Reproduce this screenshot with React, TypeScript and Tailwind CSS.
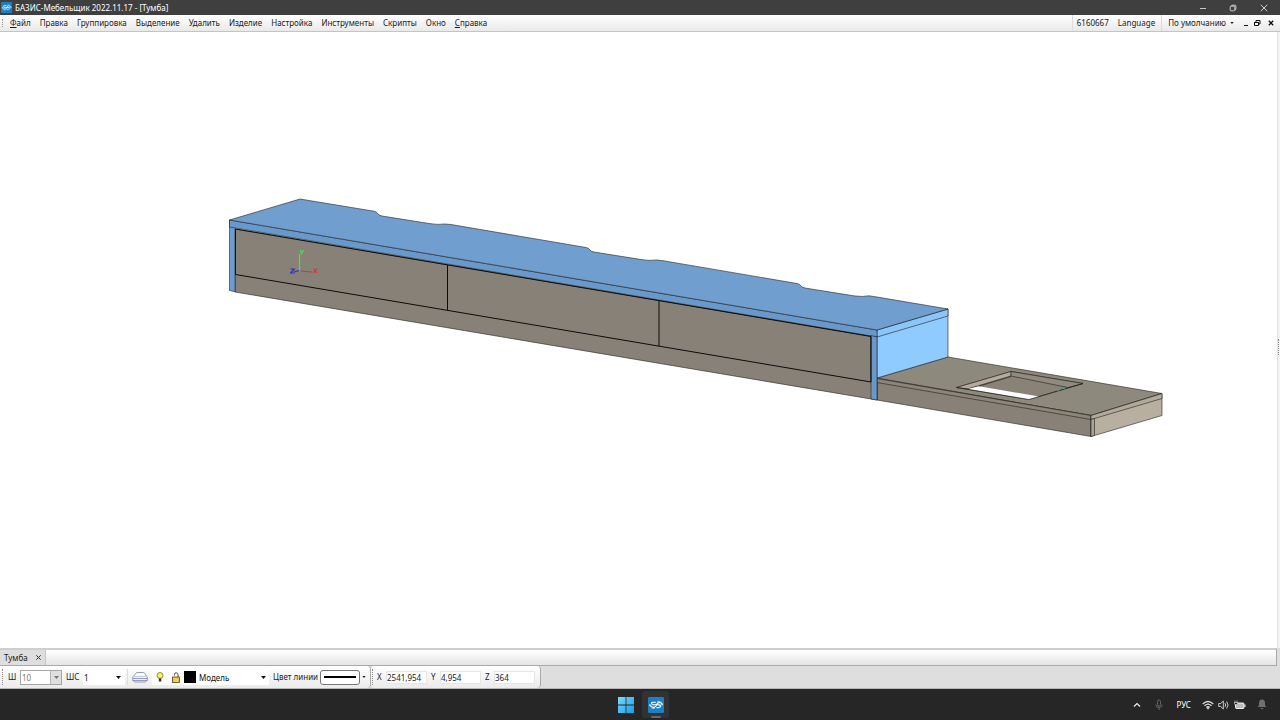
import type { ReactNode } from 'react';

const menuItems = ['Файл', 'Правка', 'Группировка', 'Выделение', 'Удалить', 'Изделие', 'Настройка', 'Инструменты', 'Скрипты', 'Окно', 'Справка'];
const underlined = new Set(['Файл', 'Справка']);

function AppIcon({ className }: { className: string }) {
  return (
    <svg className={className} viewBox="0 0 16 16" aria-hidden="true">
      <rect width="16" height="16" rx="1.2" fill="#1a7fc4" />
      <g fill="none" stroke="#fff" strokeLinecap="round">
        <path d="M7.500 5.200H4.800Q3.200 5.400 3.600 6.400T5.800 7.800H10.200Q12.400 8 12.600 9T11 10.600H8.800" strokeWidth="1.100" />
        <path d="M1.600 8.200Q3.400 10.600 6 10.400Q7.800 10.200 8.400 8.200Q9 5.600 11.200 5.400Q13.200 5.400 14.500 7.400" strokeWidth="1.100" />
        <path d="M2 7.800h4M10 8h4.400M9.500 4.500h2.500M4 11.400h2.600" strokeWidth=".7" stroke="#cfe8fa" />
      </g>
    </svg>
  );
}

function Caret({ className = 'h-[3px] w-[5px]' }: { className?: string }) {
  return (
    <svg className={`shrink-0 ${className}`} viewBox="0 0 5 3" aria-hidden="true">
      <path d="M0 0h5L2.500 3z" fill="currentColor" />
    </svg>
  );
}

function Grip() {
  return <span className="h-4 w-0 shrink-0 border-l border-dotted border-[#8d8d8d]" aria-hidden="true" />;
}

function TitleBar() {
  return (
    <header className="flex h-[15px] shrink-0 items-center justify-between bg-[#3f3f3f] text-white">
      <div className="flex items-center gap-[3px] pl-px">
        <AppIcon className="h-[11px] w-[11px]" />
        <h1 className="whitespace-nowrap text-[8px] leading-[15px]">БАЗИС-Мебельщик 2022.11.17 - [Тумба]</h1>
      </div>
      <div className="flex pr-px">
        <button aria-label="Свернуть" className="flex h-[14px] w-[30px] items-center justify-center">
          <svg className="h-2 w-2" viewBox="0 0 8 8"><path d="M1 4.500h6" stroke="#e8e8e8" strokeWidth=".8" /></svg>
        </button>
        <button aria-label="Развернуть" className="flex h-[14px] w-[30px] items-center justify-center">
          <svg className="h-2 w-2" viewBox="0 0 8 8" fill="none" stroke="#e8e8e8" strokeWidth=".8"><rect x="1.200" y="2.200" width="4.600" height="4.600" rx=".8" /><path d="M2.800 2V1.200h3.200q.9 0 .9.900v3.300H6" /></svg>
        </button>
        <button aria-label="Закрыть" className="flex h-[14px] w-[31px] items-center justify-center">
          <svg className="h-2 w-2" viewBox="0 0 8 8"><path d="M.8 .8l6.400 6.400M7.200 .8L.8 7.200" stroke="#f2f2f2" strokeWidth=".8" /></svg>
        </button>
      </div>
    </header>
  );
}

function MenuBar() {
  return (
    <div className="flex h-[17px] shrink-0 items-center justify-between border-b border-[#c4c4c4] bg-linear-to-b from-white to-[#e9e9e9] text-[#1b1b1b]">
      <div className="flex items-center pl-[2px]">
        <span className="h-2 border-l border-dotted border-[#999]" aria-hidden="true" />
        <nav className="flex gap-[9px] pl-[7px]">
          {menuItems.map((item) => (
            <button key={item} className="whitespace-nowrap text-[8px] leading-4">
              {underlined.has(item) ? <><u>{item[0]}</u>{item.slice(1)}</> : item}
            </button>
          ))}
        </nav>
      </div>
      <div className="flex items-center text-[8px] leading-4">
        <span className="border-l border-[#dcdcdc] pl-1">6160667</span>
        <button className="pr-[6px] pl-[9px]">Language</button>
        <button className="flex items-center gap-1 border-l border-[#dcdcdc] pl-[6px]">
          По умолчанию <Caret className="h-[2px] w-[4px]" />
        </button>
        <button aria-label="Свернуть окно" className="ml-2 flex w-[8px] justify-center">
          <svg className="h-2 w-2" viewBox="0 0 8 8"><path d="M2 6.500h4" stroke="#111" /></svg>
        </button>
        <button aria-label="Восстановить окно" className="ml-[3px] flex w-[8px] justify-center">
          <svg className="h-2 w-2" viewBox="0 0 8 8" fill="none" stroke="#111"><path d="M1.500 3.500h4v3h-4zM3 3V1.500h4V5H6M1 3.500h5" /></svg>
        </button>
        <button aria-label="Закрыть окно" className="ml-[6px] mr-[5px] flex w-[8px] justify-center">
          <svg className="h-2 w-2" viewBox="0 0 8 8"><path d="M1.800 1.800l4.400 4.400M6.200 1.800l-4.400 4.400" stroke="#111" strokeWidth="1.300" /></svg>
        </button>
      </div>
    </div>
  );
}

function Model() {
  return (
    <svg className="h-full min-w-0 flex-1" viewBox="0 32 1277 616" role="img" aria-label="Тумба" strokeLinejoin="round">
      <g stroke="#24221f" strokeWidth=".6">
        <path d="M877 378L948 357L1162 393.500L1091 415.500z" fill="#8d897d" />
        <path d="M877 378.500L1091 415.500V436.500L877 400z" fill="#888177" />
        <path d="M877 378.500L1091 415.500V419.500L877 382.500z" fill="#8b857a" />
        <path d="M1091 415.500L1162 393.500V415.500L1091 436.500z" fill="#b8afa1" />
        <path d="M1091 415.500L1162 393.500V398.500L1091 419.500z" fill="#b1a99b" />
        <path d="M1091 419.500L1094.500 418.500V435.500L1091 436.500z" fill="#aaa297" />
        <path d="M956.500 387.500L1011 371.500L1083 383.500L1029 399.500z" fill="#898277" />
        <path d="M956.500 387.500L1011 371.500V376L968 388.800z" fill="#b4ab9d" />
        <path d="M1011 371.500L1083 383.500L1068 387.500L1011 376z" fill="#918a7e" />
        <path d="M968 389L979 386.200L1039 396.500L1029 399.500z" fill="#fff" stroke="none" />
        <path d="M956.500 387.500L1029 399.500L1083 383.500M979 386.200L1011 376.500" fill="none" />
        <path d="M1057 391l5-3 3 1" fill="none" stroke="#60988b" strokeWidth="1" />
        <path d="M877 330L948 309V357L877 378z" fill="#90cbff" />
        <path d="M877 330L948 309V316L877 337z" fill="#8bc5fa" />
        <path d="M235 229L871 336V382L877 383V400L235 292z" fill="#888177" />
        <path d="M229.500 220L235 228V291.700L229.500 290.500z" fill="#6c9dd1" />
        <path d="M229.500 220L877 330V337L229.500 227z" fill="#6999cb" />
        <path d="M871 335.500L877 337V400L871 399z" fill="#6999cb" />
        <path d="M229.500 220L300 199L374 211.200Q377 211.700 378 214Q379 215.500 382 216L429 223.500Q438 225 445 224L451 224.500L586 247.500Q589 248 590 250Q591 251.500 594 252L641 259.500Q649 261 657 260L663 260.700L797 283.500Q800 284 801 286Q802 287.500 805 288L855 296Q863 297 869 295.800L877 297L948 309L877 330z" fill="#709ece" />
      </g>
      <g fill="none" stroke="#0c0c0c" strokeWidth="1">
        <path d="M235.500 229L871 336.500V382L235.500 274.500z" />
        <path d="M447.500 265V310M659 301V346" />
      </g>
      <g fill="none" strokeWidth="1.200">
        <path d="M299.500 270.500V254M300 250l1.800 3M303.500 250l-2.500 4.500" stroke="#39ec3f" />
        <path d="M301 271l11 1M313.500 268.500l3.500 4.500M317 268.500l-3.500 4.500" stroke="#e92b31" />
        <path d="M299 270.500l-5 1.500M290.500 269h4l-4 4h4" stroke="#2930c9" />
      </g>
    </svg>
  );
}

function Field({ label, id, value }: { label: string; id: string; value: string }) {
  return (
    <div className="flex items-center">
      <label htmlFor={id} className="w-[9px]">{label}</label>
      <input id={id} defaultValue={value} className="h-[13px] w-[41px] border border-[#e6e6e6] bg-white text-[8px] leading-[11px]" />
    </div>
  );
}

function Choice({ id, value, label, className, caret }: { id: string; value: string; label?: string; className: string; caret: ReactNode }) {
  return (
    <div className={`flex h-[15px] items-center bg-white ${className}`}>
      <select id={id} aria-label={label} className="h-full min-w-0 flex-1 appearance-none bg-transparent text-[8px] leading-[13px] outline-none">
        <option>{value}</option>
      </select>
      {caret}
    </div>
  );
}

function ToolRow() {
  return (
    <div className="flex h-[23px] shrink-0 items-stretch border-b border-[#b5b5b5] bg-[#dedede] text-[8px] text-[#222]">
      <div className="flex items-center rounded-r-sm border-r border-[#aaa] bg-linear-to-b from-white to-[#ebebeb] pl-[2px]">
        <Grip />
        <label htmlFor="w" className="ml-[5px] w-3">Ш</label>
        <Choice id="w" value="10" className="w-[42px] border border-[#a6a6a6] pl-px text-[#777]" caret={<span className="flex h-full w-[11px] items-center justify-center border-l border-[#b5b5b5] bg-[#dfdfdf]"><Caret /></span>} />
        <label htmlFor="wc" className="ml-1 w-[17px]">ШС</label>
        <Choice id="wc" value="1" className="w-[42px] pl-px text-[#111]" caret={<Caret className="mr-1 h-[3px] w-[5px]" />} />
        <span className="ml-[2px] h-4 border-l border-[#ddd]" aria-hidden="true" />
        <button aria-label="Слои" className="ml-1 flex w-4 justify-center">
          <svg className="h-3 w-4" viewBox="0 0 16 12" fill="none" stroke="#7d83ae" strokeWidth=".8"><path d="M1.500 5.500Q4 1.500 5 1.500h6.500Q13 1.500 14.500 5.500z" fill="#fafaff" /><path d="M1 5.500L.5 7.500h15L15 5.500M1 7.500L.5 9.500h15L15 7.500M1.500 9.500l1 1.500h11l1-1.500" fill="#f4f4fb" /></svg>
        </button>
        <div className="ml-1 flex h-[15px] w-[117px] items-center bg-white">
          <svg className="ml-1 h-[10px] w-[8px]" viewBox="0 0 8 10"><circle cx="4" cy="3.500" r="3" fill="#f6f75a" stroke="#77731e" strokeWidth=".8" /><path d="M2.800 6.500h2.500v3H2.800z" fill="#333" /></svg>
          <svg className="ml-2 h-[11px] w-[8px]" viewBox="0 0 8 11"><path d="M2.500 3.500V2.500Q2.500 .8 4.200 .8t1.800 1.700V5" fill="none" stroke="#444" /><rect x=".5" y="5" width="7" height="5.500" fill="#e9b73c" stroke="#604816" strokeWidth=".8" /><path d="M1.500 7h5M1.500 9h5" stroke="#fff0a0" strokeWidth=".7" /></svg>
          <span className="ml-1 h-3 w-3 bg-black" />
          <Choice id="layer" label="Слой" value="Модель" className="min-w-0 flex-1 pl-[3px] text-[#111]" caret={<Caret className="mr-[3px] h-[3px] w-[5px]" />} />
        </div>
        <span className="ml-1 w-[44px] whitespace-nowrap">Цвет линии</span>
        <button aria-label="Цвет линии" className="ml-[3px] flex h-[15px] w-10 items-center rounded-[3px] border border-[#777] bg-white px-[3px]"><span className="h-[2px] w-full bg-black" /></button>
        <button aria-label="Выбрать цвет линии" className="ml-[2px] mr-1"><Caret className="h-[2px] w-[4px]" /></button>
      </div>
      <div className="flex items-center gap-1 rounded-sm border-r border-[#aaa] bg-linear-to-b from-white to-[#ebebeb] pl-px pr-[5px]">
        <Grip />
        <Field id="x" label="X" value="2541,954" />
        <Field id="y" label="Y" value="4,954" />
        <Field id="z" label="Z" value="364" />
      </div>
    </div>
  );
}

function Taskbar() {
  return (
    <footer className="grid h-[31px] shrink-0 grid-cols-[1fr_auto_1fr] items-center bg-[#262626] text-white">
      <span />
      <div className="flex items-center gap-[3px] pl-[2px]">
        <button aria-label="Пуск" className="flex h-[26px] w-[26px] items-center justify-center">
          <svg className="h-4 w-4" viewBox="0 0 16 16"><defs><linearGradient id="win" x2="1" y2="1"><stop stopColor="#7bdcfb" /><stop offset="1" stopColor="#189be5" /></linearGradient></defs><path d="M0 0h7.600v7.600H0zM8.400 0H16v7.600H8.400zM0 8.400h7.600V16H0zM8.400 8.400H16V16H8.400z" fill="url(#win)" /></svg>
        </button>
        <button aria-label="БАЗИС-Мебельщик" className="relative flex h-[27px] w-[27px] items-center justify-center rounded-[3px] bg-[#323232]">
          <AppIcon className="h-4 w-4" />
          <span className="absolute bottom-0 h-[2px] w-[10px] rounded bg-[#666]" />
        </button>
      </div>
      <div className="flex items-center justify-end pr-[13px]">
        <svg className="h-2 w-2" viewBox="0 0 8 8"><path d="M1 5.500l3-3 3 3" fill="none" stroke="#eee" strokeWidth="1.200" /></svg>
        <svg className="ml-[14px] h-3 w-2" viewBox="0 0 8 12" fill="none" stroke="#666"><rect x="2.500" y="1" width="3" height="6" rx="1.500" /><path d="M.8 5.500q0 3 3.200 3t3.200-3M4 8.500V11" /></svg>
        <button className="ml-[14px] text-[8px]">РУС</button>
        <svg className="ml-[11px] h-[10px] w-3" viewBox="0 0 12 10" fill="none" stroke="#ddd"><path d="M.7 4Q6-1 11.300 4M2.500 5.800Q6 2.500 9.500 5.800M4.200 7.400Q6 5.800 7.800 7.400" strokeWidth="1.200" /><circle cx="6" cy="8.300" r=".7" fill="#fff" /></svg>
        <svg className="ml-1 h-[10px] w-[11px]" viewBox="0 0 11 10" fill="none" stroke="#ddd" strokeWidth=".9"><path d="M.7 3.500h2L5.300 1v8L2.700 6.500h-2zM7 3.200q1.500 1.800 0 3.600M8.600 1.500q3 3.500 0 7" /></svg>
        <svg className="ml-[5px] h-[10px] w-3" viewBox="0 0 12 10"><rect x="1.500" y="3" width="8.500" height="5.500" rx="1" fill="#bbb" stroke="#fff" strokeWidth=".9" /><path d="M11 4.500v2.500" stroke="#ddd" strokeWidth="1.200" /><path d="M1 .5v2M3 .5v2M.3 2.500h3.400v1.500q-1.700 1.500-3.400 0z" stroke="#eee" strokeWidth=".6" fill="#262626" /></svg>
        <svg className="ml-[11px] h-[11px] w-[10px]" viewBox="0 0 10 11" fill="#707070"><path d="M1 8V7.500l1-1.300V4Q2 .5 5 .5T8 4v2.200l1 1.300V8z" /><path d="M3.500 9h3q-1.500 2.500-3 0z" /></svg>
      </div>
    </footer>
  );
}

export default function App() {
  return (
    <div className="flex h-screen flex-col overflow-hidden bg-[#dedede] font-['Noto_Sans',sans-serif]">
      <TitleBar />
      <MenuBar />
      <main className="flex min-h-0 flex-1 bg-white">
        <Model />
        <div className="flex w-[3px] shrink-0 items-center border-l border-[#e2e2e2] bg-[#f4f4f4] pt-[14px]"><span className="h-4 w-px border-l border-dotted border-[#888]" /></div>
      </main>
      <div className="mr-[3px] flex h-[18px] shrink-0 border-t-[2px] border-r border-b border-[#aaa] border-t-[#cecece] bg-linear-to-b from-white to-[#e5e5e5]">
        <div className="flex items-center gap-2 border-r border-[#c5c5c5] bg-[#dedede] pr-1 pl-1 text-[8px] leading-[15px] text-[#222]">
          <span>Тумба</span>
          <button aria-label="Закрыть вкладку"><svg className="h-[5px] w-[5px]" viewBox="0 0 5 5"><path d="M.3.3l4.400 4.400M4.700.3L.3 4.700" stroke="#333" /></svg></button>
        </div>
      </div>
      <ToolRow />
      <Taskbar />
    </div>
  );
}
